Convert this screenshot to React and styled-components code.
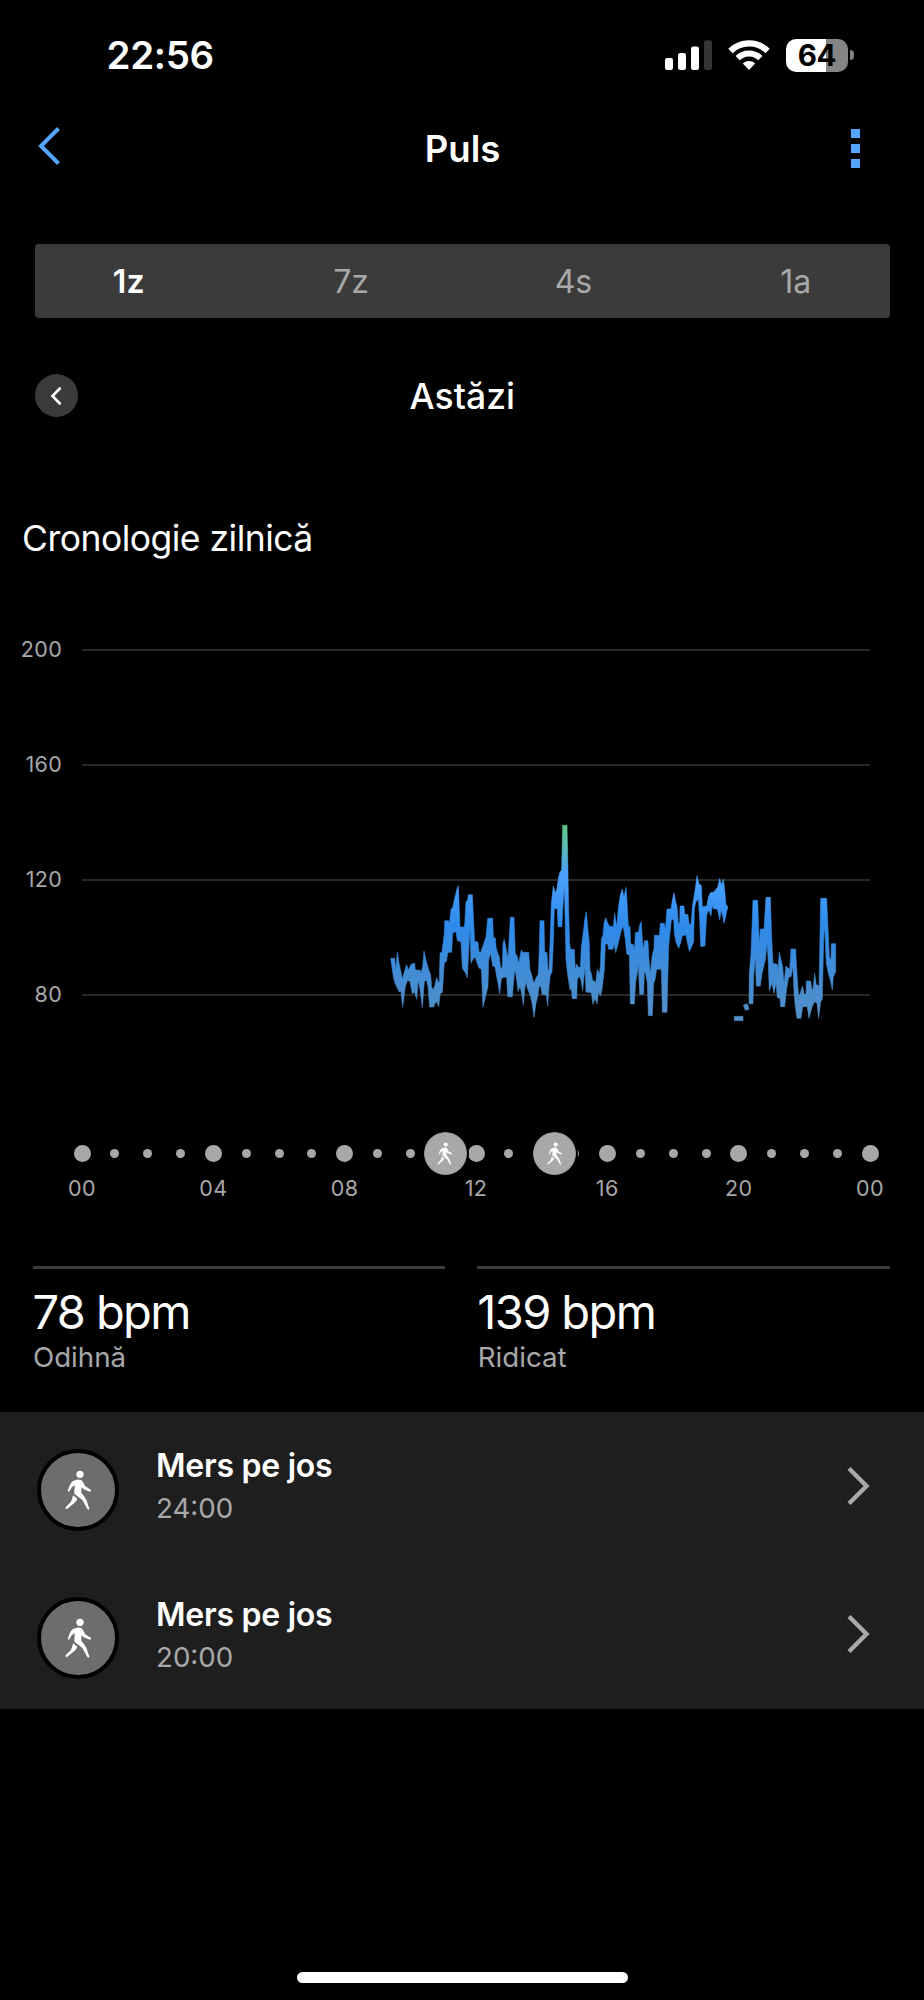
import React from "react";
import styled, { createGlobalStyle } from "styled-components";

const GlobalStyle = createGlobalStyle`
  * {
    box-sizing: border-box;
  }

  body {
    margin: 0;
    background: #000;
  }
`;

const Screen = styled.div`
  display: flex;
  flex-direction: column;
  width: 924px;
  height: 2000px;
  overflow: hidden;
  background: #000;
  color: #fff;
  font-family: Inter, "Liberation Sans", sans-serif;
`;

const StatusBar = styled.div`
  display: flex;
  justify-content: space-between;
  align-items: center;
  height: 110px;
  padding: 0 70px 0 106.6px;
`;

const Clock = styled.div`
  font-size: 38.5px;
  font-weight: 600;
  line-height: 46px;
  letter-spacing: -0.4px;
`;

const StatusIcons = styled.div`
  display: flex;
  align-items: center;
  gap: 16px;
`;

const Battery = styled.div`
  display: flex;
  align-items: center;
  gap: 2px;
`;

const BatteryBody = styled.div`
  width: 62px;
  height: 33px;
  border-radius: 10px;
  background: linear-gradient(90deg, #fff 40px, #858585 40px);
  color: #000;
  font-size: 29.5px;
  font-weight: 700;
  line-height: 33px;
  letter-spacing: -0.3px;
  text-align: center;
`;

const BatteryTip = styled.div`
  width: 4px;
  height: 10px;
  border-radius: 0 5px 5px 0;
  background: #858585;
`;

const Header = styled.div`
  display: grid;
  grid-template-columns: 60px 1fr 60px;
  align-items: center;
  height: 78px;
  padding: 0 38px;
`;

const Title = styled.div`
  padding-left: 1px;
  font-size: 36.5px;
  font-weight: 600;
  text-align: center;
`;

const BackIcon = styled.svg`
  margin-top: -6px;
`;

const MoreButton = styled.div`
  display: flex;
  flex-direction: column;
  justify-self: end;
  gap: 6px;
  margin: -2px 26px 0 0;
`;

const MoreDot = styled.div`
  width: 9px;
  height: 9px;
  background: #55a6fd;
`;

const Segments = styled.div`
  display: flex;
  gap: 34px;
  height: 74px;
  margin: 56px 34px 0 34.5px;
  border-radius: 4px;
  background: #3b3b3b;
`;

const Segment = styled.div`
  flex: 1;
  color: ${({ $active }) => ($active ? "#fff" : "#a8a8a8")};
  font-size: 32px;
  font-weight: ${({ $active }) => ($active ? 600 : 400)};
  line-height: 76px;
  text-align: center;
`;

const DayNav = styled.div`
  display: grid;
  grid-template-columns: 43px 1fr 43px;
  align-items: center;
  margin: 56px 34px 0 34.5px;
`;

const PrevDay = styled.div`
  display: flex;
  align-items: center;
  justify-content: center;
  height: 43px;
  border-radius: 50%;
  background: #3b3b3b;
`;

const DayLabel = styled.div`
  height: 43px;
  font-size: 35.5px;
  font-weight: 500;
  line-height: 45px;
  text-align: center;
`;

const SectionTitle = styled.div`
  margin: 100px 0 0 22px;
  font-size: 35.5px;
  line-height: 44px;
  letter-spacing: -0.52px;
`;

const Chart = styled.div`
  display: flex;
  gap: 20px;
  margin-top: 59px;
`;

const Scale = styled.div`
  display: flex;
  flex-direction: column;
  gap: 91px;
  width: 62px;
  padding-top: 17px;
`;

const ScaleLabel = styled.div`
  color: #a8a8a8;
  font-size: 21.5px;
  line-height: 24px;
  letter-spacing: 0.3px;
  text-align: right;
`;

const Timeline = styled.div`
  position: relative;
  display: flex;
  justify-content: space-between;
  align-items: center;
  height: 48px;
  margin: 69px 45px 0 73.5px;
`;

const Hour = styled.div`
  display: flex;
  justify-content: center;
  width: 17px;

  &::before {
    content: "";
    width: ${({ $major }) => ($major ? 17 : 9)}px;
    height: ${({ $major }) => ($major ? 17 : 9)}px;
    border-radius: 50%;
    background: #a8a8a8;
  }
`;

const Marker = styled.div`
  position: absolute;
  top: 1px;
  left: ${({ $left }) => $left}px;
  display: flex;
  align-items: center;
  justify-content: center;
  width: 47px;
  height: 47px;
  border: 2px solid #000;
  border-radius: 50%;
  background: #a8a8a8;
  background-clip: padding-box;
  box-shadow: inset 0 0 0 1px #999;
`;

const HourLabels = styled.div`
  display: flex;
  justify-content: space-between;
  margin: -1px 24px 0 52px;
`;

const HourLabel = styled.div`
  width: 60px;
  color: #a8a8a8;
  font-size: 21.5px;
  line-height: 24px;
  letter-spacing: 0.4px;
  text-align: center;
`;

const Stats = styled.div`
  display: grid;
  grid-template-columns: 1fr 1fr;
  gap: 32px;
  height: 146px;
  margin: 66px 34px 0 32.5px;
`;

const Stat = styled.div`
  border-top: 3px solid #3b3b3b;
  padding-top: 14px;
`;

const StatValue = styled.div`
  font-size: 47px;
  font-weight: 400;
  line-height: 58px;
  letter-spacing: -1.6px;
`;

const StatName = styled.div`
  padding-left: 0.5px;
  color: #a8a8a8;
  font-size: 27.7px;
  line-height: 32px;
`;

const ActivityList = styled.div`
  height: 297px;
  background: #1e1e1e;
`;

const Activity = styled.div`
  display: flex;
  align-items: center;
  height: 148.4px;
  padding: 7px 54px 0 37px;
`;

const ActivityIcon = styled.div`
  display: flex;
  align-items: center;
  justify-content: center;
  width: 82px;
  height: 82px;
  border: 4px solid #000;
  border-radius: 50%;
  background: #6d6d6d;
`;

const ActivityText = styled.div`
  flex: 1;
  margin: -5px 0 0 37px;
`;

const ActivityName = styled.div`
  font-size: 32px;
  font-weight: 600;
  line-height: 42px;
  letter-spacing: -0.25px;
`;

const ActivityTime = styled.div`
  color: #a8a8a8;
  font-size: 27.7px;
  line-height: 42px;
`;

const RowChevron = styled.svg`
  margin-top: -8px;
`;

const HomeIndicator = styled.div`
  width: 331px;
  height: 11px;
  margin: auto auto 17px 297px;
  border-radius: 6px;
  background: #fff;
`;

// heart rate bands, three units per pixel
const bands = [
  "32,445 44,445 48,478 52,425 58,465 63,485 67,508 73,485 80,464 85,480 90,470 94,462 104,460 106,480 120,480 123,488 128,470 132,423 138,450 145,475 152,495 155,530 160,540 165,525 170,502 175,517 178,515 180,430 186,425 193,370 194,332 206,332 208,343 213,298 218,293 224,265 230,240 235,227 238,300 240,350 251,352 254,345 258,275 263,270 265,254 277,254 280,315 284,394 294,396 297,425 302,428 306,415 310,405 318,380 323,325 338,325 340,382 346,385 348,410 353,430 358,440 362,475 367,472 369,400 373,388 378,415 384,445 391,322 402,322 406,430 412,440 416,460 424,420 428,427 446,427 450,480 456,497 461,520 468,505 475,492 477,440 480,332 492,332 494,425 501,428 504,480 507,480 511,370 514,280 520,228 526,250 531,235 536,200 540,186 545,180 548,46 561,46 563,130 566,300 569,400 572,418 583,418 586,480 590,462 596,472 601,472 604,410 610,365 614,330 619,305 623,350 628,400 630,480 634,490 638,512 643,512 647,520 652,478 658,492 661,470 664,388 669,375 672,340 677,323 683,338 688,348 700,350 704,310 710,350 715,295 721,255 727,237 732,262 738,232 742,290 745,347 750,350 752,402 761,404 764,420 766,368 776,365 779,345 784,335 787,390 791,420 793,392 804,392 807,450 811,490 816,440 822,415 823,376 838,376 841,340 853,340 856,360 861,297 873,297 877,270 882,248 887,275 891,290 895,340 899,340 900,288 912,288 914,312 924,314 927,340 933,345 937,290 942,260 946,235 951,197 957,222 964,226 967,290 980,288 985,262 991,248 1002,246 1006,240 1010,235 1013,232 1019,205 1024,225 1030,207 1034,240 1038,285 1044,290 1040,305 1037,320 1032,340 1028,318 1024,300 1019,330 1013,300 1009,297 1000,296 997,285 993,318 986,300 980,315 975,408 962,410 959,330 955,268 948,275 943,295 941,395 935,410 928,424 922,398 918,375 907,377 903,395 896,415 888,397 883,370 881,328 874,330 870,370 866,410 861,607 847,607 844,478 830,478 825,510 821,520 817,617 805,617 802,520 797,490 793,487 791,553 779,553 775,460 772,490 767,515 763,582 751,582 748,435 740,432 736,390 730,350 724,360 717,390 712,410 707,428 702,400 699,418 686,418 683,402 676,402 673,480 666,540 661,558 656,545 651,582 645,565 639,583 634,548 618,546 615,470 608,542 603,510 597,498 592,510 590,566 577,566 574,535 570,540 563,495 558,450 553,225 548,300 546,350 534,350 532,296 523,296 520,400 516,487 511,495 507,530 503,588 499,555 486,553 482,528 477,532 474,555 468,580 462,622 457,585 452,560 450,555 442,535 438,515 434,540 430,586 425,550 420,530 414,544 408,495 404,480 397,560 383,560 380,502 370,502 364,508 359,552 354,520 350,500 345,470 338,468 332,430 326,450 324,530 319,550 309,592 304,478 297,474 290,455 285,440 278,450 273,460 270,350 262,503 256,488 247,475 243,395 232,392 228,365 218,368 215,427 204,427 199,455 193,458 187,548 181,550 176,590 171,575 165,580 161,591 149,591 144,530 139,510 133,515 127,593 121,545 115,510 110,568 103,545 97,552 90,515 83,510 76,530 68,592 63,545 57,545 45,520 40,500",
  "1063,619 1089,619 1089,632 1063,632",
  "1090,585 1102,581 1107,598 1096,601",
  "1107,581 1108,490 1113,430 1116,350 1119,271 1133,271 1138,400 1141,357 1152,357 1158,262 1171,262 1175,380 1179,460 1192,463 1194,480 1198,427 1208,470 1212,520 1218,468 1225,475 1229,478 1233,417 1247,417 1249,460 1253,520 1256,560 1261,548 1268,528 1273,555 1278,550 1279,513 1292,513 1295,535 1299,540 1304,490 1309,525 1314,525 1317,535 1322,265 1340,265 1344,350 1348,440 1353,450 1354,401 1367,401 1367,486 1360,500 1357,540 1351,510 1345,490 1339,460 1334,350 1331,390 1327,567 1322,575 1316,625 1311,580 1304,575 1297,588 1287,625 1282,590 1274,590 1268,590 1263,625 1251,625 1246,590 1242,550 1239,470 1233,500 1226,502 1220,535 1214,590 1202,590 1200,565 1192,563 1188,520 1182,550 1176,520 1168,543 1164,440 1161,400 1156,450 1150,475 1146,490 1141,528 1129,528 1126,440 1121,500 1119,581",
];

const gridLines = [30, 145, 260, 375];

const activities = [
  { name: "Mers pe jos", time: "24:00", markerLeft: 348 },
  { name: "Mers pe jos", time: "20:00", markerLeft: 457.5 },
];

const Walker = ({ width, height }) => (
  <svg width={width} height={height} viewBox="194 208 80 120" fill="#fff">
    <circle cx="239" cy="221" r="11" />
    <path d="M224 239Q234 234 243 238Q248 243 255 257L271 267Q274 271 269 273Q258 270 250 266L243 260V277Q253 287 258 297L267 324Q265 329 261 325L246 298L224 281Q221 278 222 272L223 253L215 259L207 272Q202 275 203 269Q209 248 217 242Z" />
    <path d="M218 284L231 294Q229 301 222 307L200 325Q194 326 196 320L211 305Q216 297 218 284Z" />
  </svg>
);

const SignalIcon = () => (
  <svg width="47" height="30" viewBox="0 0 47 30" fill="#fff">
    <rect y="18" width="8" height="12" rx="2.2" />
    <rect x="13" y="13" width="8" height="17" rx="2.2" />
    <rect x="26" y="6.5" width="8" height="23.5" rx="2.2" />
    <rect x="39" y="0.2" width="8" height="29.8" rx="2.2" fill="#353535" />
  </svg>
);

const WifiIcon = () => (
  <svg width="42" height="30" viewBox="0 0 42 30" fill="none">
    <path d="M2.4 11A26.5 26.5 0 0 1 39.6 11" stroke="#fff" strokeWidth="6.2" />
    <path d="M9.6 18.2A16.3 16.3 0 0 1 32.4 18.2" stroke="#fff" strokeWidth="6" />
    <path d="M21 30L14.8 23.6A9 9 0 0 1 27.2 23.6Z" fill="#fff" />
  </svg>
);

const HeartRatePlot = () => (
  <svg width="788" height="440" viewBox="0 0 788 440">
    <defs>
      <linearGradient id="pulse" gradientUnits="userSpaceOnUse" x1="0" y1="46" x2="0" y2="620">
        <stop offset="0" stopColor="#60c38c" />
        <stop offset="0.1" stopColor="#5dbfb0" />
        <stop offset="0.25" stopColor="#4ba0fb" />
        <stop offset="0.33" stopColor="#449cfb" />
        <stop offset="0.53" stopColor="#2e8aea" />
        <stop offset="0.85" stopColor="#488dcf" />
        <stop offset="1" stopColor="#5290c8" />
      </linearGradient>
    </defs>
    {gridLines.map((y) => (
      <rect key={y} y={y - 1} width="788" height="2" fill="#292929" />
    ))}
    <g transform="translate(298 190) scale(0.33333)" fill="url(#pulse)" stroke="url(#pulse)" strokeWidth="1.6">
      {bands.map((points) => (
        <polygon key={points} points={points} />
      ))}
    </g>
  </svg>
);

const App = () => {
  return (
    <Screen>
      <GlobalStyle />
      <StatusBar>
        <Clock>22:56</Clock>
        <StatusIcons>
          <SignalIcon />
          <WifiIcon />
          <Battery>
            <BatteryBody>64</BatteryBody>
            <BatteryTip />
          </Battery>
        </StatusIcons>
      </StatusBar>
      <Header>
        <BackIcon width="23" height="38" viewBox="0 0 23 38" fill="none">
          <path d="M20.5 1.5L3 19L20.5 36.5" stroke="#55a6fd" strokeWidth="4" />
        </BackIcon>
        <Title>Puls</Title>
        <MoreButton>
          <MoreDot />
          <MoreDot />
          <MoreDot />
        </MoreButton>
      </Header>
      <Segments>
        <Segment $active>1z</Segment>
        <Segment>7z</Segment>
        <Segment>4s</Segment>
        <Segment>1a</Segment>
      </Segments>
      <DayNav>
        <PrevDay>
          <svg width="12" height="18" viewBox="0 0 12 18" fill="none">
            <path d="M9.8 1.5L2.5 9L9.8 16.5" stroke="#fff" strokeWidth="2.6" strokeLinecap="round" />
          </svg>
        </PrevDay>
        <DayLabel>Astăzi</DayLabel>
      </DayNav>
      <SectionTitle>Cronologie zilnică</SectionTitle>
      <Chart>
        <Scale>
          <ScaleLabel>200</ScaleLabel>
          <ScaleLabel>160</ScaleLabel>
          <ScaleLabel>120</ScaleLabel>
          <ScaleLabel>80</ScaleLabel>
        </Scale>
        <HeartRatePlot />
      </Chart>
      <Timeline>
        {Array.from({ length: 25 }, (_, hour) => (
          <Hour key={hour} $major={hour % 4 === 0} />
        ))}
        {activities.map(({ time, markerLeft }) => (
          <Marker key={time} $left={markerLeft}>
            <Walker width={15.5} height={23} />
          </Marker>
        ))}
      </Timeline>
      <HourLabels>
        {["00", "04", "08", "12", "16", "20", "00"].map((label, i) => (
          <HourLabel key={i}>{label}</HourLabel>
        ))}
      </HourLabels>
      <Stats>
        <Stat>
          <StatValue>78 bpm</StatValue>
          <StatName>Odihnă</StatName>
        </Stat>
        <Stat>
          <StatValue>139 bpm</StatValue>
          <StatName>Ridicat</StatName>
        </Stat>
      </Stats>
      <ActivityList>
        {activities.map(({ name, time }) => (
          <Activity key={time}>
            <ActivityIcon>
              <Walker width={26.7} height={40} />
            </ActivityIcon>
            <ActivityText>
              <ActivityName>{name}</ActivityName>
              <ActivityTime>{time}</ActivityTime>
            </ActivityText>
            <RowChevron width="23" height="38" viewBox="0 0 23 38" fill="none">
              <path d="M2 1.5L19.5 19L2 36.5" stroke="#a8a8a8" strokeWidth="4.4" />
            </RowChevron>
          </Activity>
        ))}
      </ActivityList>
      <HomeIndicator />
    </Screen>
  );
};

export default App;
